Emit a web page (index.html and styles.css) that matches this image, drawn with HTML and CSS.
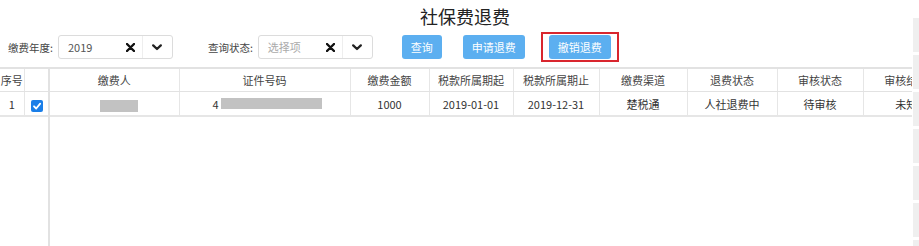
FILE: index.html
```html
<!DOCTYPE html>
<html lang="zh-CN">
<head>
    <meta charset="UTF-8">
    <title>社保费退费</title>
    <link rel="stylesheet" href="styles.css">
</head>
<body>
    <div class="page">
        <h1 class="title">社保费退费</h1>

        <div class="toolbar">
            <label class="field-label">缴费年度:</label>
            <div class="select">
                <span class="select-value">2019</span>
                <span class="select-clear">
                    <svg width="9" height="9" viewBox="0 0 9 9"><path d="M1 1L8 8M8 1L1 8" stroke="#111" stroke-width="2.4" stroke-linecap="round"/></svg>
                </span>
                <span class="select-arrow">
                    <svg width="10" height="7" viewBox="0 0 10 7"><path d="M1.2 1.4L5 5L8.8 1.4" fill="none" stroke="#222" stroke-width="2.3" stroke-linecap="round" stroke-linejoin="round"/></svg>
                </span>
            </div>

            <label class="field-label gap-label">查询状态:</label>
            <div class="select">
                <span class="select-value placeholder">选择项</span>
                <span class="select-clear">
                    <svg width="9" height="9" viewBox="0 0 9 9"><path d="M1 1L8 8M8 1L1 8" stroke="#111" stroke-width="2.4" stroke-linecap="round"/></svg>
                </span>
                <span class="select-arrow">
                    <svg width="10" height="7" viewBox="0 0 10 7"><path d="M1.2 1.4L5 5L8.8 1.4" fill="none" stroke="#222" stroke-width="2.3" stroke-linecap="round" stroke-linejoin="round"/></svg>
                </span>
            </div>

            <button class="btn btn-query">查询</button>
            <button class="btn btn-apply">申请退费</button>
            <span class="highlight">
                <button class="btn">撤销退费</button>
            </span>
        </div>

        <div class="grid">
            <div class="grid-fixed">
                <table class="grid-table">
                    <colgroup><col style="width:24px"><col style="width:24px"></colgroup>
                    <thead>
                        <tr><th>序号</th><th></th></tr>
                    </thead>
                    <tbody>
                        <tr>
                            <td>1</td>
                            <td>
                                <span class="checkbox">
                                    <svg width="12" height="12" viewBox="0 0 12 12"><path d="M3 6.3L5.2 8.5L9.2 3.6" fill="none" stroke="#fff" stroke-width="1.8" stroke-linecap="round" stroke-linejoin="round"/></svg>
                                </span>
                            </td>
                        </tr>
                    </tbody>
                </table>
            </div>
            <div class="grid-main">
                <table class="grid-table main-table">
                    <colgroup>
                        <col style="width:129px"><col style="width:171px"><col style="width:79px">
                        <col style="width:84px"><col style="width:86px"><col style="width:88px">
                        <col style="width:90px"><col style="width:86px">
                    </colgroup>
                    <thead>
                        <tr>
                            <th>缴费人</th><th>证件号码</th><th>缴费金额</th><th>税款所属期起</th>
                            <th>税款所属期止</th><th>缴费渠道</th><th>退费状态</th><th>审核状态</th><th>审核结果</th>
                        </tr>
                    </thead>
                    <tbody>
                        <tr>
                            <td><span class="masked masked-name"></span></td>
                            <td><span class="id-cell">4<span class="masked masked-id"></span></span></td>
                            <td>1000</td>
                            <td>2019-01-01</td>
                            <td>2019-12-31</td>
                            <td>楚税通</td>
                            <td>人社退费中</td>
                            <td>待审核</td>
                            <td>未知</td>
                        </tr>
                    </tbody>
                </table>
            </div>
        </div>

        <div class="side-dock">
            <span></span><span></span><span></span><span></span><span></span><span></span><span></span>
        </div>
    </div>
</body>
</html>
```

FILE: styles.css
```css
body {
    margin: 0;
    font-family: "Noto Sans CJK SC", "Noto Sans", sans-serif;
    color: #333;
    background: #fff;
}

.page {
    position: relative;
    width: 919px;
    height: 246px;
    overflow: hidden;
    padding-top: 2px;
    box-sizing: border-box;
}

.title {
    margin: 0;
    padding-left: 11px;
    height: 28px;
    line-height: 28px;
    font-size: 18px;
    font-weight: normal;
    text-align: center;
    color: #222;
}

.toolbar {
    display: flex;
    align-items: center;
    height: 30px;
    margin-top: 2px;
    padding-left: 8px;
    font-size: 11px;
}

.field-label {
    margin-right: 5px;
    font-size: 10.5px;
    color: #444;
}

.gap-label {
    margin-left: 35px;
}

.select {
    display: flex;
    align-items: center;
    width: 115px;
    height: 24px;
    box-sizing: border-box;
    border: 1px solid #dcdcdc;
    border-radius: 3px;
}

.select-value {
    flex: 1;
    padding-left: 9px;
    color: #555;
}

.placeholder {
    color: #aaa;
}

.select-clear {
    display: flex;
    margin-right: 7px;
}

.select-arrow {
    display: flex;
    align-items: center;
    justify-content: center;
    width: 29px;
    height: 100%;
    border-left: 1px solid #eee;
}

.btn {
    height: 24px;
    padding: 0 9px;
    border: none;
    border-radius: 3px;
    background: #5caff0;
    color: #fff;
    font-family: inherit;
    font-size: 11px;
    cursor: pointer;
}

.btn-query {
    margin-left: 29px;
}

.btn-apply {
    margin-left: 21px;
}

.highlight {
    display: flex;
    margin-left: 16px;
    padding: 1px 6px;
    border: 2px solid #d9262e;
}

.grid {
    display: flex;
    margin-top: 5px;
    height: 179px;
}

.grid-fixed {
    width: 48px;
    border-right: 2px solid #e2e2e2;
}

.grid-main {
    width: 862px;
    overflow: hidden;
}

.grid-table {
    border-collapse: collapse;
    table-layout: fixed;
    font-size: 11px;
}

.main-table {
    width: 899px;
}

.grid-table th,
.grid-table td {
    padding: 0;
    text-align: center;
    white-space: nowrap;
    overflow: hidden;
    border-right: 1px solid #e6e6e6;
}

.grid-table th {
    height: 22px;
    font-weight: normal;
    color: #444;
    border-top: 2px solid #e2e2e2;
    border-bottom: 1px solid #e2e2e2;
}

.grid-table td {
    height: 23px;
    color: #333;
    border-bottom: 2px solid #e6e6e6;
}

.grid-table th:last-child,
.grid-table td:last-child {
    border-right: none;
}

.checkbox {
    display: inline-flex;
    width: 12px;
    height: 12px;
    margin-top: 2px;
    margin-left: 2px;
    border-radius: 2px;
    background: #1a7ee8;
    vertical-align: middle;
}

.masked {
    display: inline-block;
    background: #c2c2c2;
    vertical-align: middle;
}

.masked-name {
    width: 38px;
    height: 12px;
    margin-left: 9px;
}

.id-cell {
    display: inline-flex;
    align-items: center;
    margin-left: 5px;
}

.masked-id {
    width: 101px;
    height: 11px;
    margin-left: 2px;
}

.side-dock {
    position: absolute;
    top: 18px;
    right: 0;
    width: 6px;
    display: flex;
    flex-direction: column;
    gap: 3px;
}

.side-dock span {
    height: 34px;
    background: #efefef;
}
```
